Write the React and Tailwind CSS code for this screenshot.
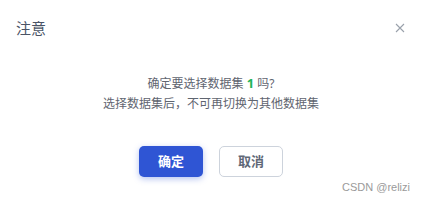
import React from 'react';

export default function App() {
  return (
    <div
      className="w-[422px] h-[201px] bg-white relative overflow-hidden"
      style={{ fontFamily: '"Noto Sans", "Noto Sans CJK SC", sans-serif' }}
    >
      {/* Header */}
      <div className="flex items-center justify-between h-[56px] pl-[16px] pr-[17px]">
        <span className="text-[15px] text-[#4a5466]">注意</span>
        <svg width="10" height="10" viewBox="0 0 10 10" className="text-[#9aa1ab] -mt-[1px]">
          <path d="M1 1L9 9M9 1L1 9" stroke="currentColor" strokeWidth="1.1" />
        </svg>
      </div>

      {/* Body */}
      <div className="flex flex-col items-center text-[12px] text-[#5f6570] leading-[20px] mt-[17px]">
        <p>
          确定要选择数据集 <span className="font-bold text-[13px] text-[#22b45a]">1</span> 吗?
        </p>
        <p>选择数据集后，不可再切换为其他数据集</p>
      </div>

      {/* Footer */}
      <div className="flex justify-center gap-[16px] mt-[32px]">
        <button className="w-[64px] h-[31px] rounded-[5px] bg-[#2f55d4] text-white text-[13px] font-bold shadow-[0_2px_6px_rgba(47,85,212,0.35)]">
          确定
        </button>
        <button className="w-[64px] h-[31px] rounded-[5px] bg-white border border-[#cdd3dc] text-[#5f6877] text-[13px] font-bold">
          取消
        </button>
      </div>

      <span
        className="absolute right-[12px] bottom-[6px] text-[11px] text-[#9a9a9a]"
        style={{ fontFamily: '"Liberation Sans", Arial, sans-serif' }}
      >
        CSDN @relizi
      </span>
    </div>
  );
}
